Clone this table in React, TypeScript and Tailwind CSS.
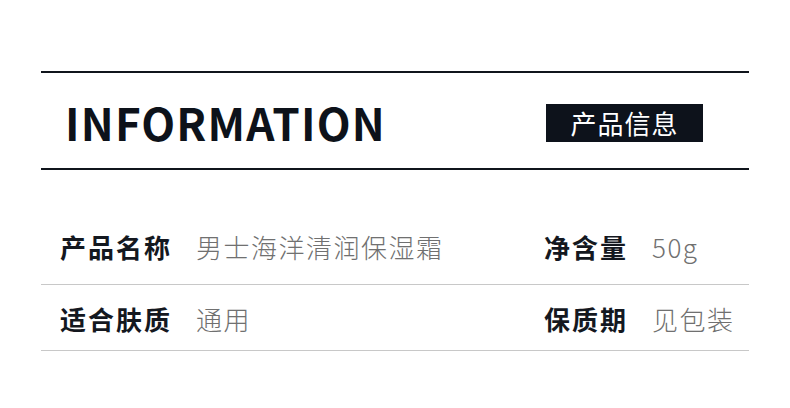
const FONT = "font-['Noto_Sans_CJK_SC','Noto_Sans',sans-serif]";

const rows = [
  [
    { label: "产品名称", value: "男士海洋清润保湿霜" },
    { label: "净含量", value: "50g" },
  ],
  [
    { label: "适合肤质", value: "通用" },
    { label: "保质期", value: "见包装" },
  ],
];

function Field({ label, value }: { label: string; value: string }) {
  return (
    <div className="flex items-center gap-[24px]">
      <span className="text-[26px] font-bold tracking-[2px] text-[#14181f] leading-none">
        {label}
      </span>
      <span className="text-[26px] font-light tracking-[1.5px] text-[#707070] leading-none">
        {value}
      </span>
    </div>
  );
}

export default function App() {
  return (
    <div className={`w-[790px] h-[408px] bg-white pt-[71px] px-[41px] ${FONT}`}>
      <div className="border-y-2 border-[#10151c]">
        <div className="flex items-center justify-between h-[95px] pl-[24px] pr-[46px]">
          <h1 className="text-[44px] font-bold tracking-[1.2px] text-[#0d121a] leading-none pt-[2px]">
            INFORMATION
          </h1>
          <div className="w-[157px] h-[38px] mt-[4px] bg-[#0d121b] flex items-center justify-center">
            <span className="text-[26px] text-white tracking-[1px] leading-none">产品信息</span>
          </div>
        </div>
      </div>
      <div>
        {rows.map((row, i) => (
          <div
            key={i}
            className={`flex items-end border-b border-[#c8c8c8] pl-[19px] ${
              i === 0 ? "h-[115px] pb-[24px]" : "h-[66px] pb-[18px]"
            }`}
          >
            <div className="w-[484px]">
              <Field {...row[0]} />
            </div>
            <Field {...row[1]} />
          </div>
        ))}
      </div>
    </div>
  );
}
